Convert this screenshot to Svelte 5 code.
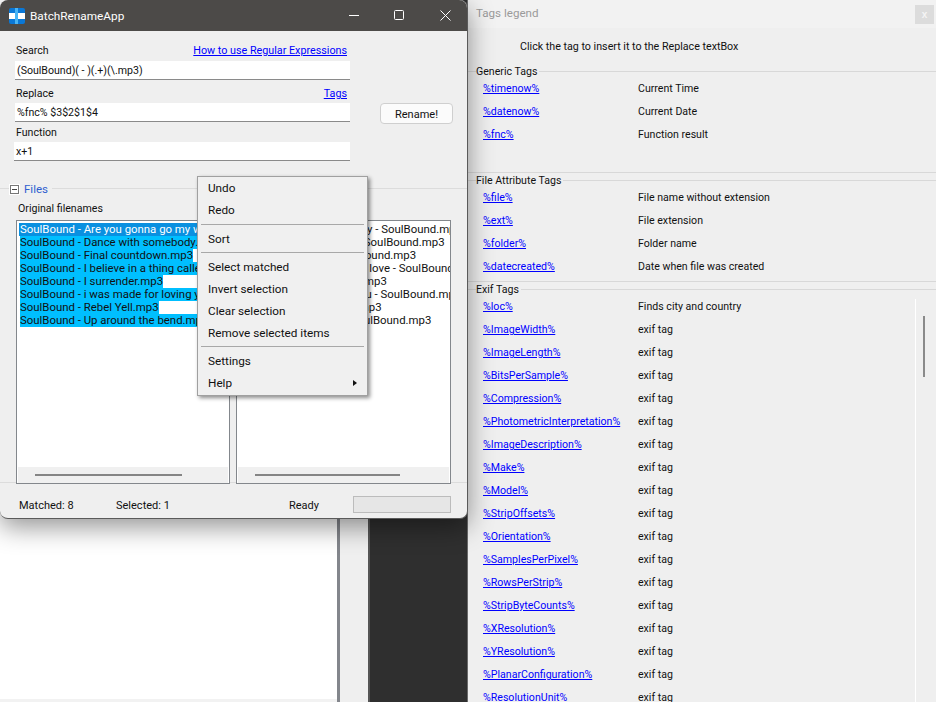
<script>
    const left_names = [
        "SoulBound - Are you gonna go my way.mp3",
        "SoulBound - Dance with somebody.mp3",
        "SoulBound - Final countdown.mp3",
        "SoulBound - I believe in a thing called love.mp3",
        "SoulBound - I surrender.mp3",
        "SoulBound - i was made for loving you.mp3",
        "SoulBound - Rebel Yell.mp3",
        "SoulBound - Up around the bend.mp3"
    ];
    const right_names = [
        "Are you gonna go my way - SoulBound.mp3",
        "Dance with somebody - SoulBound.mp3",
        "Final countdown - SoulBound.mp3",
        "I believe in a thing called love - SoulBound.mp3",
        "I surrender - SoulBound.mp3",
        "i was made for loving you - SoulBound.mp3",
        "Rebel Yell - SoulBound.mp3",
        "Up around the bend - SoulBound.mp3"
    ];
    const generic_tags = [
        ["%timenow%", "Current Time"],
        ["%datenow%", "Current Date"],
        ["%fnc%", "Function result"]
    ];
    const file_tags = [
        ["%file%", "File name without extension"],
        ["%ext%", "File extension"],
        ["%folder%", "Folder name"],
        ["%datecreated%", "Date when file was created"]
    ];
    const exif_names = [
        "ImageWidth", "ImageLength", "BitsPerSample", "Compression",
        "PhotometricInterpretation", "ImageDescription", "Make", "Model",
        "StripOffsets", "Orientation", "SamplesPerPixel", "RowsPerStrip",
        "StripByteCounts", "XResolution", "YResolution", "PlanarConfiguration",
        "ResolutionUnit"
    ];
    const exif_tags = [["%loc%", "Finds city and country"]].concat(
        exif_names.map((name) => ["%" + name + "%", "exif tag"])
    );
</script>

<div class="desktop">
    <div class="back_white"></div>
    <div class="back_bar"></div>
    <div class="back_light"></div>
    <div class="back_dark"></div>
</div>

<section class="tags_window">
    <header class="tags_title">
        <span>Tags legend</span>
        <button class="tags_close">x</button>
    </header>
    <p class="tags_hint">Click the tag to insert it to the Replace textBox</p>

    <div class="tag_group generic">
        <div class="group_label">Generic Tags</div>
        {#each generic_tags as tag}
            <div class="tag_row"><a href="#top">{tag[0]}</a><span>{tag[1]}</span></div>
        {/each}
    </div>

    <div class="tag_group attribute">
        <div class="group_label">File Attribute Tags</div>
        {#each file_tags as tag}
            <div class="tag_row"><a href="#top">{tag[0]}</a><span>{tag[1]}</span></div>
        {/each}
    </div>

    <div class="tag_group exif">
        <div class="group_label">Exif Tags</div>
        <div class="exif_scroll">
            {#each exif_tags as tag}
                <div class="tag_row"><a href="#top">{tag[0]}</a><span>{tag[1]}</span></div>
            {/each}
            <div class="exif_thumb"></div>
        </div>
    </div>
</section>

<section class="main_window">
    <header class="title_bar">
        <svg class="app_icon" width="16" height="16" viewBox="0 0 16 16">
            <rect width="16" height="16" rx="2" fill="#0a78d7" />
            <rect x="0" y="5" width="16" height="6" fill="#fff" />
            <rect x="6" y="0" width="3" height="16" fill="#48b4f5" />
        </svg>
        <span class="title_text">BatchRenameApp</span>
        <svg class="caption" width="120" height="31" viewBox="0 0 120 31" fill="none" stroke="#fff">
            <path d="M9 15.5h10" />
            <rect x="54.5" y="10.5" width="9" height="9" rx="1" />
            <path d="M100.5 10.5l10 10M110.5 10.5l-10 10" />
        </svg>
    </header>

    <div class="form_area">
        <div class="fields">
            <div class="label_row"><span>Search</span><a href="#top">How to use Regular Expressions</a></div>
            <div class="text_input">(SoulBound)( - )(.+)(\.mp3)</div>
            <div class="label_row second"><span>Replace</span><a href="#top">Tags</a></div>
            <div class="text_input">%fnc% $3$2$1$4</div>
            <div class="label_row third"><span>Function</span></div>
            <div class="text_input wide">x+1</div>
        </div>
        <button class="rename_button">Rename!</button>
    </div>

    <div class="files_group">
        <div class="files_legend">
            <span class="collapse_box"></span>
            <span>Files</span>
        </div>
        <div class="files_label">Original filenames</div>
        <div class="lists">
            <div class="list_box">
                <div class="list_items">
                    {#each left_names as name, i}
                        <div class="list_row"><span class={i === 0 ? "row_focus" : "row_selected"}>{name}</span></div>
                    {/each}
                </div>
                <div class="h_scroll"><div class="h_thumb left_thumb"></div></div>
            </div>
            <div class="list_box">
                <div class="list_items right_items">
                    {#each right_names as name}
                        <div class="list_row"><span>{name}</span></div>
                    {/each}
                </div>
                <div class="h_scroll"><div class="h_thumb right_thumb"></div></div>
            </div>
        </div>
    </div>

    <footer class="status_row">
        <span class="matched">Matched: 8</span>
        <span class="selected">Selected: 1</span>
        <span class="ready">Ready</span>
        <div class="progress"></div>
    </footer>

    <div class="context_menu">
        <div class="menu_item">Undo</div>
        <div class="menu_item">Redo</div>
        <div class="menu_sep first"></div>
        <div class="menu_item">Sort</div>
        <div class="menu_sep"></div>
        <div class="menu_item">Select matched</div>
        <div class="menu_item">Invert selection</div>
        <div class="menu_item">Clear selection</div>
        <div class="menu_item">Remove selected items</div>
        <div class="menu_sep"></div>
        <div class="menu_item">Settings</div>
        <div class="menu_item">Help<span class="menu_arrow"></span></div>
    </div>
</section>

<style>
    :global(body){
        margin: 0;
        background: #ffffff;
        overflow: hidden;
    }

    :global(#app){
        width: 936px;
        height: 702px;
        position: relative;
        overflow: hidden;
        font-family: "Roboto", "Liberation Sans", sans-serif;
        font-size: 10.6px;
        color: #111111;
    }

    a{
        color: #0000ff;
        text-decoration: underline;
    }

    /* things behind the two windows */
    .desktop{
        display: flex;
        width: 467px;
        height: 702px;
    }

    .back_white{
        width: 337px;
        background: #ffffff;
        border-bottom: 3px solid #f2f2f2;
    }

    .back_bar{
        width: 3px;
        background: #83868c;
    }

    .back_light{
        width: 28px;
        background: #efefef;
    }

    .back_dark{
        width: 99px;
        background: #2f2f2f;
        border-left: 2px solid #555555;
        box-sizing: border-box;
    }

    /* tags window */
    .tags_window{
        position: absolute;
        left: 467px;
        top: 0;
        width: 469px;
        height: 702px;
        box-sizing: border-box;
        border-left: 1px solid #6a6a6a;
        background: #efefef;
        overflow: hidden;
    }

    .tags_title{
        display: flex;
        justify-content: space-between;
        align-items: flex-start;
        height: 28px;
        background: #f2f2f2;
        color: #9a9a9a;
        font-size: 11.6px;
    }

    .tags_title span{
        margin: 6px 0 0 8px;
    }

    .tags_close{
        width: 19px;
        height: 19px;
        margin: 5px 2px 0 0;
        padding: 0;
        border: none;
        background: #dcdcdc;
        color: #f4f4f4;
        font: bold 10px "Liberation Sans", sans-serif;
    }

    .tags_hint{
        margin: 12px 0 0 52px;
        line-height: 14px;
        font-size: 10.7px;
    }

    .tag_group{
        border-top: 1px solid #d8d8d8;
    }

    .group_label{
        width: fit-content;
        margin: -7px 0 -2px 8px;
        padding: 0 2px 0 0;
        line-height: 14px;
        background: #efefef;
    }

    .generic{
        margin-top: 17px;
        height: 100px;
        border-bottom: 1px solid #d8d8d8;
    }

    .attribute{
        margin-top: 7px;
        height: 100px;
        border-bottom: 1px solid #d8d8d8;
    }

    .exif{
        margin-top: 7px;
    }

    .tag_row{
        display: grid;
        grid-template-columns: 155px 1fr;
        height: 23px;
        align-items: center;
        margin-left: 15px;
        white-space: nowrap;
    }

    .exif_scroll{
        position: relative;
        width: 447px;
    }

    .exif_scroll::after{
        content: "";
        position: absolute;
        left: 447px;
        top: 4px;
        bottom: 0;
        width: 1px;
        background: #ffffff;
    }

    .exif_thumb{
        position: absolute;
        left: 455px;
        top: 21px;
        width: 2px;
        height: 61px;
        background: #8a8a8a;
    }

    /* main window */
    .main_window{
        position: absolute;
        left: 0;
        top: 0;
        width: 468px;
        height: 519px;
        box-sizing: border-box;
        border-right: 1px solid #5a5a5a;
        border-bottom: 1px solid #5a5a5a;
        border-radius: 8px;
        background: #efefef;
        box-shadow: 0 8px 26px rgba(0,0,0,0.42);
    }

    .title_bar{
        display: flex;
        align-items: center;
        height: 31px;
        padding-left: 9px;
        background: #4c4a48;
        border-radius: 8px 8px 0 0;
        color: #ffffff;
    }

    .app_icon{
        flex: none;
    }

    .title_text{
        margin-left: 5px;
        font-size: 11.8px;
    }

    .caption{
        margin-left: auto;
        margin-right: 7px;
    }

    .form_area{
        display: flex;
        align-items: flex-start;
        padding: 12px 0 0 15px;
    }

    .fields{
        width: 335px;
    }

    .label_row{
        display: flex;
        justify-content: space-between;
        height: 14px;
        line-height: 15px;
        padding: 0 3px 0 1px;
        margin-bottom: 4px;
    }

    .label_row a{
        font-size: 10.75px;
    }

    .label_row.second{
        margin-top: 6px;
        margin-bottom: 3px;
    }

    .label_row.third{
        margin-top: 3px;
        margin-bottom: 3px;
    }

    .text_input{
        height: 18px;
        line-height: 19px;
        padding-left: 2px;
        background: #ffffff;
        border-bottom: 1px solid #8a8a8a;
    }

    .text_input.wide{
        margin-left: -1px;
    }

    .rename_button{
        width: 73px;
        height: 21px;
        margin: 60px 0 0 30px;
        padding: 1px 0 0;
        background: #fbfbfb;
        border: 1px solid #cfcfcf;
        border-radius: 4px;
        font: inherit;
        font-size: 11px;
        color: inherit;
    }

    .files_group{
        margin-top: 27px;
        height: 295px;
        box-sizing: border-box;
        border-top: 1px solid #dcdcdc;
        border-bottom: 1px solid #dcdcdc;
    }

    .files_legend{
        display: flex;
        align-items: center;
        gap: 5px;
        width: fit-content;
        height: 14px;
        margin: -7px 0 0 10px;
        padding-right: 4px;
        background: #efefef;
        color: #2f5fd0;
        font-size: 11.5px;
    }

    .collapse_box{
        position: relative;
        width: 7px;
        height: 7px;
        border: 1px solid #777777;
        background: #ffffff;
        box-shadow: 0 0 0 1px #ffffff;
    }

    .collapse_box::after{
        content: "";
        position: absolute;
        left: 1px;
        right: 1px;
        top: 3px;
        height: 1px;
        background: #444444;
    }

    .files_label{
        margin: 6px 0 0 18px;
        line-height: 14px;
    }

    .lists{
        display: grid;
        grid-template-columns: 214px 215px;
        gap: 6px;
        margin: 4px 0 0 16px;
    }

    .list_box{
        height: 264px;
        box-sizing: border-box;
        border: 1px solid #83878c;
        background: #ffffff;
        display: flex;
        flex-direction: column;
        overflow: hidden;
    }

    .list_items{
        flex: 1;
        padding: 2px 0 0 1px;
        overflow: hidden;
        font-size: 11.4px;
    }

    .right_items{
        padding-left: 4px;
    }

    .list_row{
        height: 13px;
        line-height: 13px;
        white-space: nowrap;
        padding-left: 2px;
    }

    .row_focus{
        display: inline-block;
        background: #0a90e0;
        color: #ffffff;
        margin-left: -1px;
        padding-left: 1px;
    }

    .row_selected{
        display: inline-block;
        background: #00bfff;
    }

    .h_scroll{
        height: 16px;
        margin: 0 1px;
        background: #f0f0f0;
        position: relative;
    }

    .h_thumb{
        position: absolute;
        top: 7px;
        height: 2px;
        background: #858585;
    }

    .left_thumb{
        left: 17px;
        width: 147px;
    }

    .right_thumb{
        left: 17px;
        width: 145px;
    }

    .status_row{
        display: flex;
        align-items: center;
        height: 26px;
        padding: 8px 0 0 19px;
        font-size: 11px;
    }

    .status_row span{
        margin-top: 3px;
    }

    .matched{
        width: 97px;
    }

    .selected{
        width: 173px;
    }

    .ready{
        width: 64px;
    }

    .progress{
        width: 96px;
        height: 15px;
        border: 1px solid #bcbcbc;
        background: #e6e6e6;
    }

    /* context menu */
    .context_menu{
        position: absolute;
        left: 197px;
        top: 176px;
        width: 169px;
        padding: 0 0 1px;
        border: 1px solid #a0a0a0;
        background: #f0f0f0;
        box-shadow: 2px 2px 4px rgba(0,0,0,0.45);
        font-size: 11.75px;
    }

    .menu_item{
        position: relative;
        height: 22px;
        line-height: 22px;
        padding-left: 10px;
    }

    .menu_sep{
        height: 1px;
        margin: 2px 3px 3px;
        background: #a8a8a8;
    }

    .menu_sep.first{
        margin-top: 3px;
    }

    .menu_arrow{
        position: absolute;
        right: 10px;
        top: 8px;
        width: 0;
        height: 0;
        border-left: 4px solid #111111;
        border-top: 3.5px solid transparent;
        border-bottom: 3.5px solid transparent;
    }
</style>
